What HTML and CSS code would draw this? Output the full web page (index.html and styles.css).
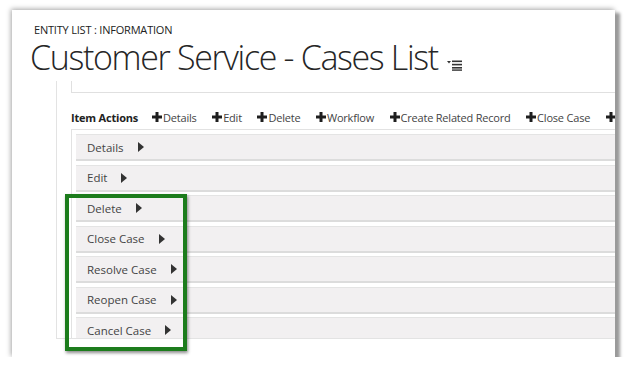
FILE: index.html
```html
<!DOCTYPE html>
<html lang="en">
<head>
  <meta charset="UTF-8" />
  <title>Customer Service - Cases List</title>
  <link rel="stylesheet" href="styles.css">
</head>
<body>
  <div class="frame">
    <div class="crumb">ENTITY LIST : INFORMATION</div>
    <h1 class="title">Customer Service - Cases List
      <svg class="title-icon" width="16" height="11" viewBox="0 0 16 11">
        <polygon points="0,1 4,1 2,3.5" fill="#333"/>
        <rect x="5" y="0.5" width="10" height="1.6" fill="#333"/>
        <rect x="5" y="3.8" width="10" height="1.6" fill="#333"/>
        <rect x="5" y="7" width="10" height="1.6" fill="#333"/>
        <rect x="5" y="9.4" width="10" height="1.4" fill="#333"/>
      </svg>
    </h1>

    <div class="section">
      <div class="topbox"></div>

      <div class="actions">
        <span class="actions-label">Item Actions</span>
        <span class="action"><svg class="plus" width="10" height="10" viewBox="0 0 10 10"><path d="M3.5 0h3v3.5H10v3H6.5V10h-3V6.5H0v-3h3.5z"/></svg>Details</span>
        <span class="action"><svg class="plus" width="10" height="10" viewBox="0 0 10 10"><path d="M3.5 0h3v3.5H10v3H6.5V10h-3V6.5H0v-3h3.5z"/></svg>Edit</span>
        <span class="action"><svg class="plus" width="10" height="10" viewBox="0 0 10 10"><path d="M3.5 0h3v3.5H10v3H6.5V10h-3V6.5H0v-3h3.5z"/></svg>Delete</span>
        <span class="action"><svg class="plus" width="10" height="10" viewBox="0 0 10 10"><path d="M3.5 0h3v3.5H10v3H6.5V10h-3V6.5H0v-3h3.5z"/></svg>Workflow</span>
        <span class="action"><svg class="plus" width="10" height="10" viewBox="0 0 10 10"><path d="M3.5 0h3v3.5H10v3H6.5V10h-3V6.5H0v-3h3.5z"/></svg>Create Related Record</span>
        <span class="action"><svg class="plus" width="10" height="10" viewBox="0 0 10 10"><path d="M3.5 0h3v3.5H10v3H6.5V10h-3V6.5H0v-3h3.5z"/></svg>Close Case</span>
        <span class="action"><svg class="plus" width="10" height="10" viewBox="0 0 10 10"><path d="M3.5 0h3v3.5H10v3H6.5V10h-3V6.5H0v-3h3.5z"/></svg>Resolve Case</span>
      </div>

      <div class="list">
        <div class="row">Details <span class="arrow"></span></div>
        <div class="row">Edit <span class="arrow"></span></div>
        <div class="row">Delete <span class="arrow"></span></div>
        <div class="row">Close Case <span class="arrow"></span></div>
        <div class="row">Resolve Case <span class="arrow"></span></div>
        <div class="row">Reopen Case <span class="arrow"></span></div>
        <div class="row">Cancel Case <span class="arrow"></span></div>
      </div>
    </div>

    <div class="highlight"></div>
  </div>
</body>
</html>
```

FILE: styles.css
```css
body {
  margin: 0;
  background: #fff;
  font-family: "Open Sans", "Noto Sans", sans-serif;
  color: #333;
}
.frame {
  position: relative;
  margin: 10px 0 0 12px;
  width: 603px;
  height: 347px;
  background: #fff;
  overflow: hidden;
  box-shadow: 4px 4px 3px 1px #9a9a9a, -1px -1px 5px rgba(0,0,0,0.35);
}
.crumb {
  padding: 12px 0 0 22px;
  font-size: 11px;
  letter-spacing: -0.2px;
  color: #222;
  line-height: 15px;
}
.title {
  margin: 1px 0 0 18px;
  font-size: 34px;
  font-weight: 300;
  letter-spacing: -1.35px;
  color: #262626;
  line-height: 38px;
  white-space: nowrap;
}
.title-icon {
  margin-left: 2px;
  vertical-align: -1px;
}
.section {
  margin: 5px 0 0 44px;
  width: 700px;
  height: 257px;
  border-left: 1px solid #e3e3e3;
  border-bottom: 1px solid #e3e3e3;
  overflow: hidden;
}
.topbox {
  margin-left: 14px;
  height: 11px;
  border-left: 1px solid #e0e0e0;
  border-bottom: 1px solid #e0e0e0;
}
.actions {
  display: flex;
  align-items: center;
  height: 24px;
  padding-top: 12px;
  margin-left: 14px;
  font-size: 11px;
  letter-spacing: -0.2px;
  color: #444;
  white-space: nowrap;
}
.actions-label {
  font-weight: 700;
  color: #222;
  margin-right: 14px;
}
.action {
  display: flex;
  align-items: center;
  margin-right: 15.5px;
}
.plus {
  fill: #1e1e1e;
  margin-right: 1px;
}
.list {
  margin-left: 14px;
  padding: 4px 0 0 4px;
  border-top: 1px solid #e2e2e2;
  border-left: 1px solid #e2e2e2;
}
.row {
  display: flex;
  align-items: center;
  height: 24px;
  margin-bottom: 3.5px;
  padding-left: 11px;
  background: #f2f0f1;
  border-top: 1px solid #e4e4e4;
  border-bottom: 2px solid #dcdcdc;
  font-size: 11.5px;
  color: #444;
}
.arrow {
  width: 0;
  height: 0;
  margin-left: 14px;
  border-top: 5px solid transparent;
  border-bottom: 5px solid transparent;
  border-left: 6px solid #333;
}
.highlight {
  position: absolute;
  left: 53px;
  top: 184px;
  width: 114px;
  height: 149px;
  border: 4px solid #1c7c1c;
  box-shadow: 1px 2px 3px rgba(0,0,0,0.45);
}
```
